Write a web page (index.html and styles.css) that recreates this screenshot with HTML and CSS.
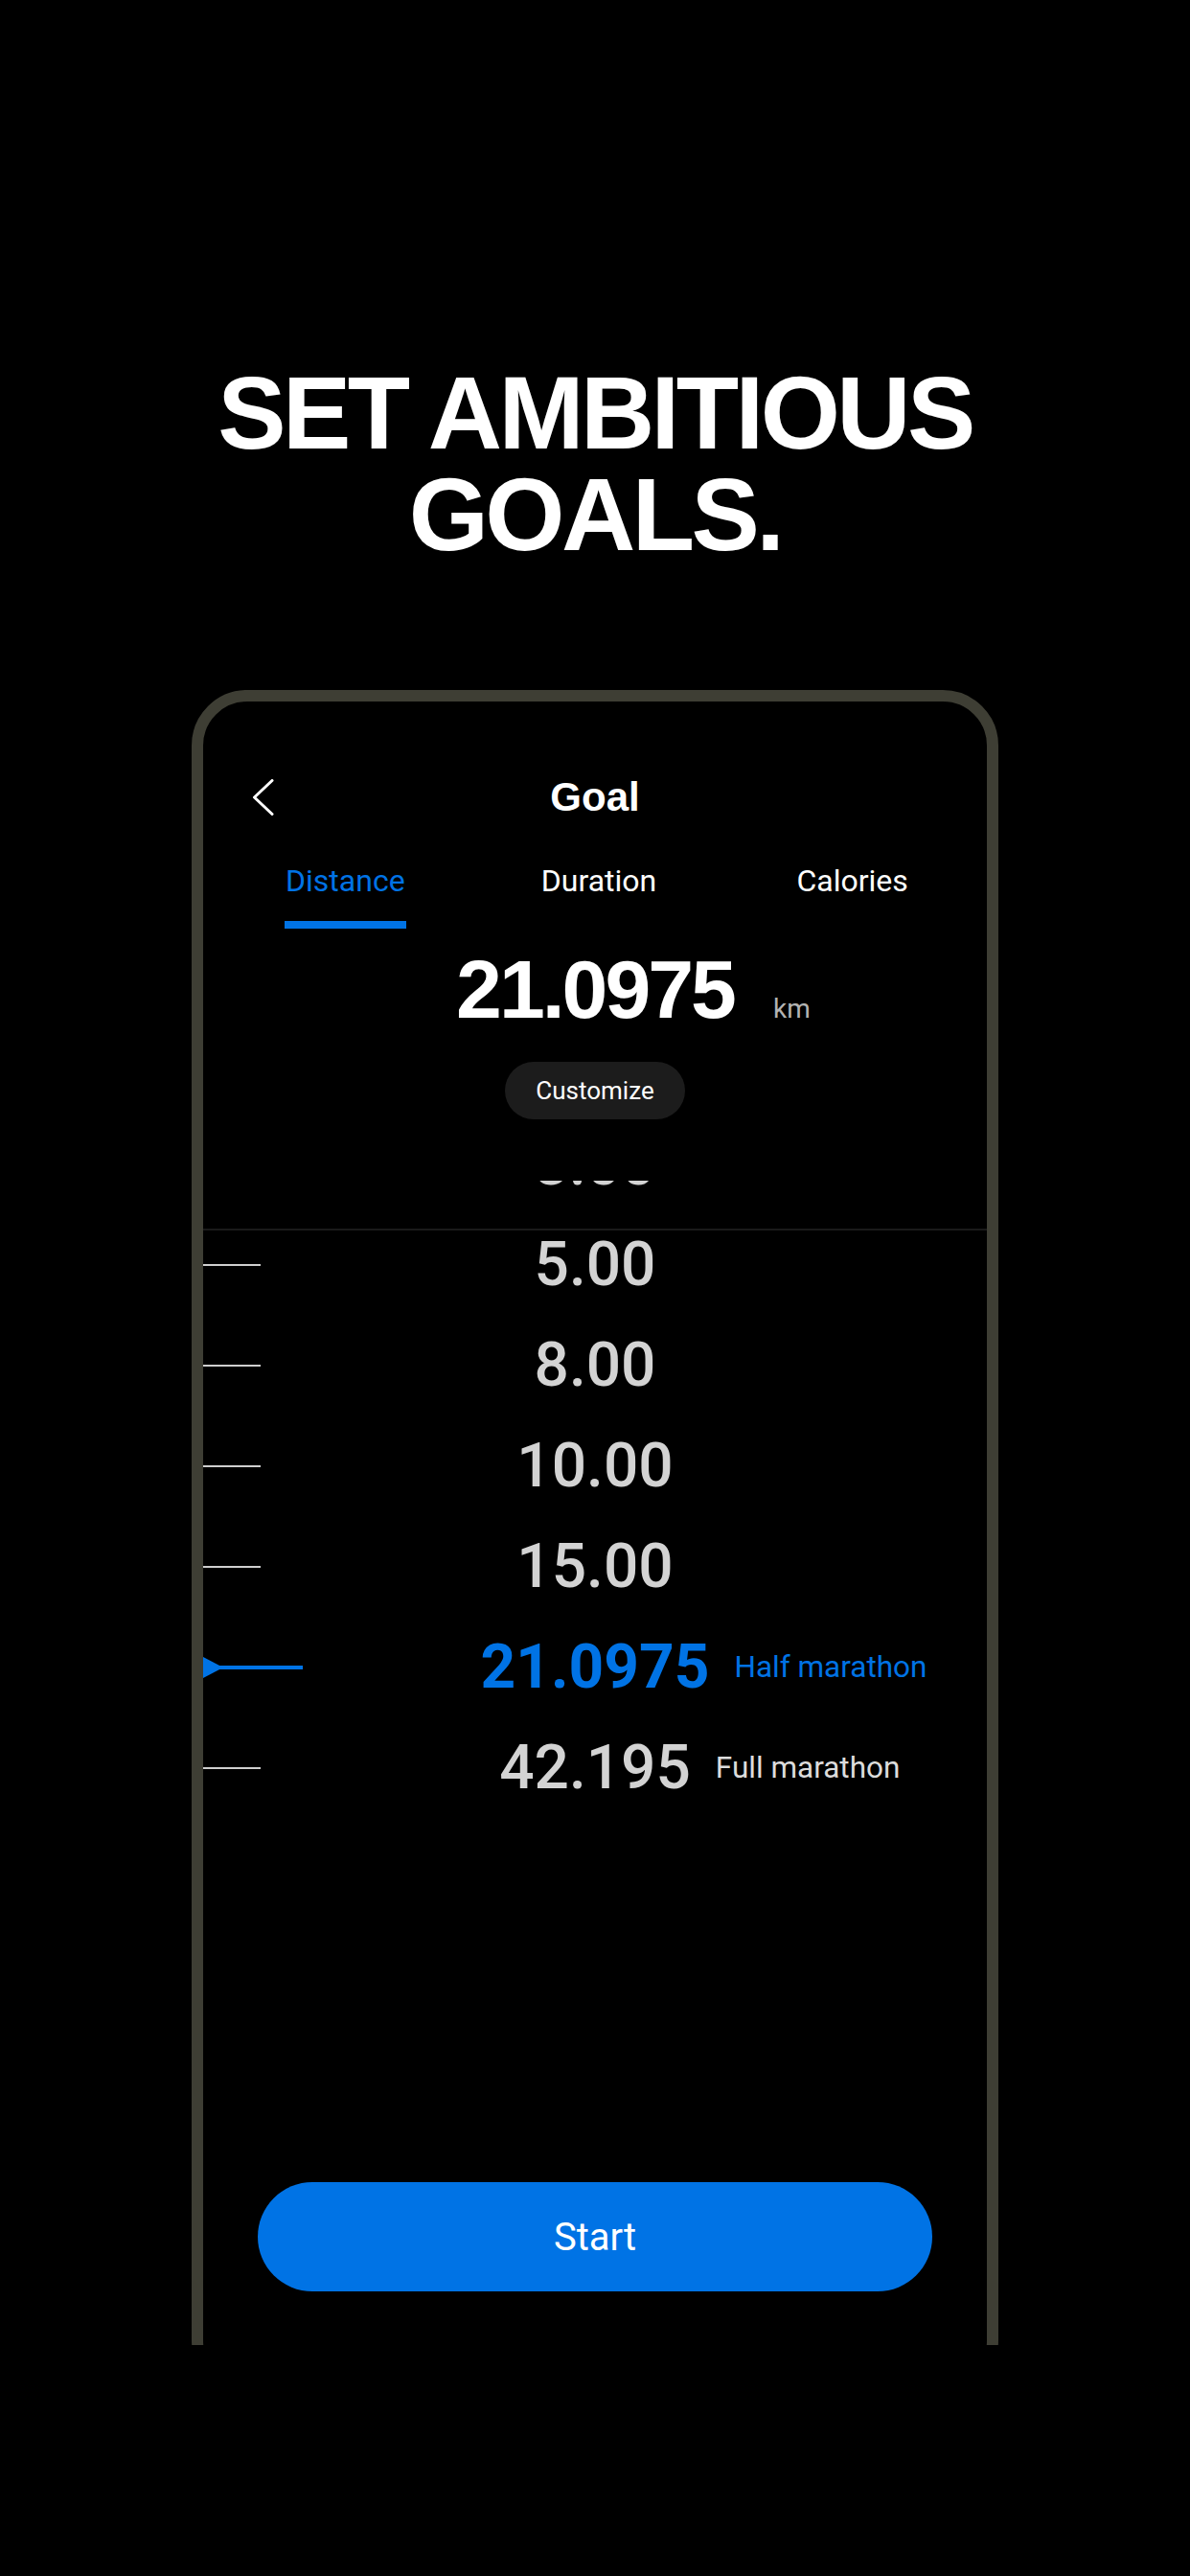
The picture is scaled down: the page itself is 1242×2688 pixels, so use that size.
FILE: index.html
```html
<!DOCTYPE html>
<html lang="en">
<head>
<meta charset="utf-8">
<title>Set ambitious goals</title>
<link rel="stylesheet" href="styles.css">
</head>
<body>
<main class="page">
  <h1 class="headline"><span class="headline-line">SET AMBITIOUS</span><span class="headline-line">GOALS.</span></h1>
  <div class="device-clip">
    <div class="device">
      <header class="app-bar">
        <button class="back" aria-label="Back">
          <svg width="24" height="38" viewBox="0 0 24 38"><path d="M21 1.5 L2.5 19 L21 36.5" fill="none" stroke="#ffffff" stroke-width="3" stroke-linecap="round" stroke-linejoin="round"/></svg>
        </button>
        <h2 class="title">Goal</h2>
        <span class="spacer"></span>
      </header>
      <nav class="tabs">
        <span class="tab tab-active">Distance</span>
        <span class="tab">Duration</span>
        <span class="tab">Calories</span>
      </nav>
      <div class="value-row">
        <span class="spacer"></span>
        <span class="value">21.0975</span>
        <span class="unit">km</span>
      </div>
      <button class="customize">Customize</button>
      <div class="picker">
        <div class="picker-line"></div>
        <ul class="wheel">
          <li class="row"><span class="tick"></span><span class="num">3.00</span><span class="label"></span></li>
          <li class="row"><span class="tick"></span><span class="num">5.00</span><span class="label"></span></li>
          <li class="row"><span class="tick"></span><span class="num">8.00</span><span class="label"></span></li>
          <li class="row"><span class="tick"></span><span class="num">10.00</span><span class="label"></span></li>
          <li class="row"><span class="tick"></span><span class="num">15.00</span><span class="label"></span></li>
          <li class="row row-active">
            <svg class="marker" width="104" height="22" viewBox="0 0 104 22"><path d="M0 0 L21 11 L0 22 Z" fill="#0073e5"/><rect x="10" y="9" width="94" height="4" fill="#0073e5"/></svg>
            <span class="num">21.0975</span><span class="label">Half marathon</span>
          </li>
          <li class="row"><span class="tick"></span><span class="num">42.195</span><span class="label">Full marathon</span></li>
        </ul>
      </div>
      <button class="start">Start</button>
    </div>
  </div>
</main>
</body>
</html>
```

FILE: styles.css
```css
html, body {
  margin: 0;
  padding: 0;
  background: #000000;
}

body {
  width: 1242px;
  height: 2688px;
  overflow: hidden;
  font-family: Roboto, "Noto Sans", "Liberation Sans", sans-serif;
  color: #ffffff;
}

.page {
  padding-top: 378px;
}

.headline {
  margin: 0;
  font-family: "Liberation Sans", Arial, sans-serif;
  font-weight: 700;
  font-size: 107px;
  line-height: 106px;
  letter-spacing: -3.6px;
  text-align: center;
  color: #ffffff;
}

.headline-line {
  display: block;
  height: 106px;
}

.device-clip {
  margin-top: 130px;
  margin-left: 200px;
  width: 842px;
  height: 1727px;
  overflow: hidden;
}

.device {
  box-sizing: border-box;
  width: 842px;
  height: 1780px;
  border: 12px solid #3e3e34;
  border-radius: 58px;
  background: #000000;
  display: flex;
  flex-direction: column;
}

.app-bar {
  margin-top: 75px;
  height: 50px;
  display: grid;
  grid-template-columns: 1fr auto 1fr;
  align-items: center;
}

.back {
  justify-self: start;
  margin-left: 51px;
  padding: 0;
  border: 0;
  background: none;
  display: block;
  height: 38px;
}

.back svg {
  display: block;
}

.title {
  margin: 0;
  font-family: "Liberation Sans", Arial, sans-serif;
  font-weight: 700;
  font-size: 42px;
  line-height: 50px;
  color: #ffffff;
}

.tabs {
  margin-top: 43px;
  padding: 0 8px 0 16px;
  display: grid;
  grid-template-columns: 1fr 1fr 1fr;
  justify-items: center;
}

.tab {
  font-size: 32px;
  line-height: 38px;
  padding: 0 1px 23px;
  border-bottom: 8px solid transparent;
  color: #ffffff;
}

.tab-active {
  color: #0073e5;
  border-bottom-color: #0073e5;
}

.value-row {
  margin-top: 20px;
  display: grid;
  grid-template-columns: 1fr auto 1fr;
  align-items: baseline;
}

.value {
  font-family: "Liberation Sans", Arial, sans-serif;
  font-weight: 700;
  font-size: 86px;
  line-height: 86px;
  letter-spacing: -3px;
  color: #ffffff;
}

.unit {
  justify-self: start;
  margin-left: 41px;
  padding-bottom: 5px;
  font-size: 28px;
  color: #b3b3b3;
}

.customize {
  display: block;
  margin: 33px auto 0;
  width: 188px;
  height: 60px;
  border: 0;
  border-radius: 30px;
  background: #1c1c1c;
  color: #ffffff;
  font-family: Roboto, "Noto Sans", sans-serif;
  font-size: 26px;
  padding: 0;
}

.picker {
  position: relative;
  margin-top: 64px;
  height: 960px;
  overflow: hidden;
}

.picker-line {
  position: absolute;
  top: 50px;
  left: 0;
  right: 0;
  height: 2px;
  background: #1a1a1a;
}

.wheel {
  list-style: none;
  margin: -70px 0 0;
  padding: 0;
}

.row {
  height: 105px;
  display: grid;
  grid-template-columns: 1fr auto 1fr;
  align-items: center;
}

.tick {
  justify-self: start;
  width: 60px;
  height: 2px;
  background: #cfcfcf;
}

.marker {
  justify-self: start;
  display: block;
}

.num {
  font-size: 64px;
  line-height: 1;
  font-weight: 500;
  color: #d3d3d3;
}

.label {
  justify-self: start;
  margin-left: 26px;
  font-size: 31.5px;
  color: #dcdcdc;
}

.row-active .num {
  font-weight: 700;
  color: #0073e5;
}

.row-active .label {
  color: #0073e5;
}

.start {
  display: block;
  margin: 85px auto 0;
  width: 704px;
  height: 114px;
  border: 0;
  border-radius: 57px;
  background: #0073e5;
  color: #ffffff;
  font-family: Roboto, "Noto Sans", sans-serif;
  font-size: 40px;
  padding: 0;
}
```
